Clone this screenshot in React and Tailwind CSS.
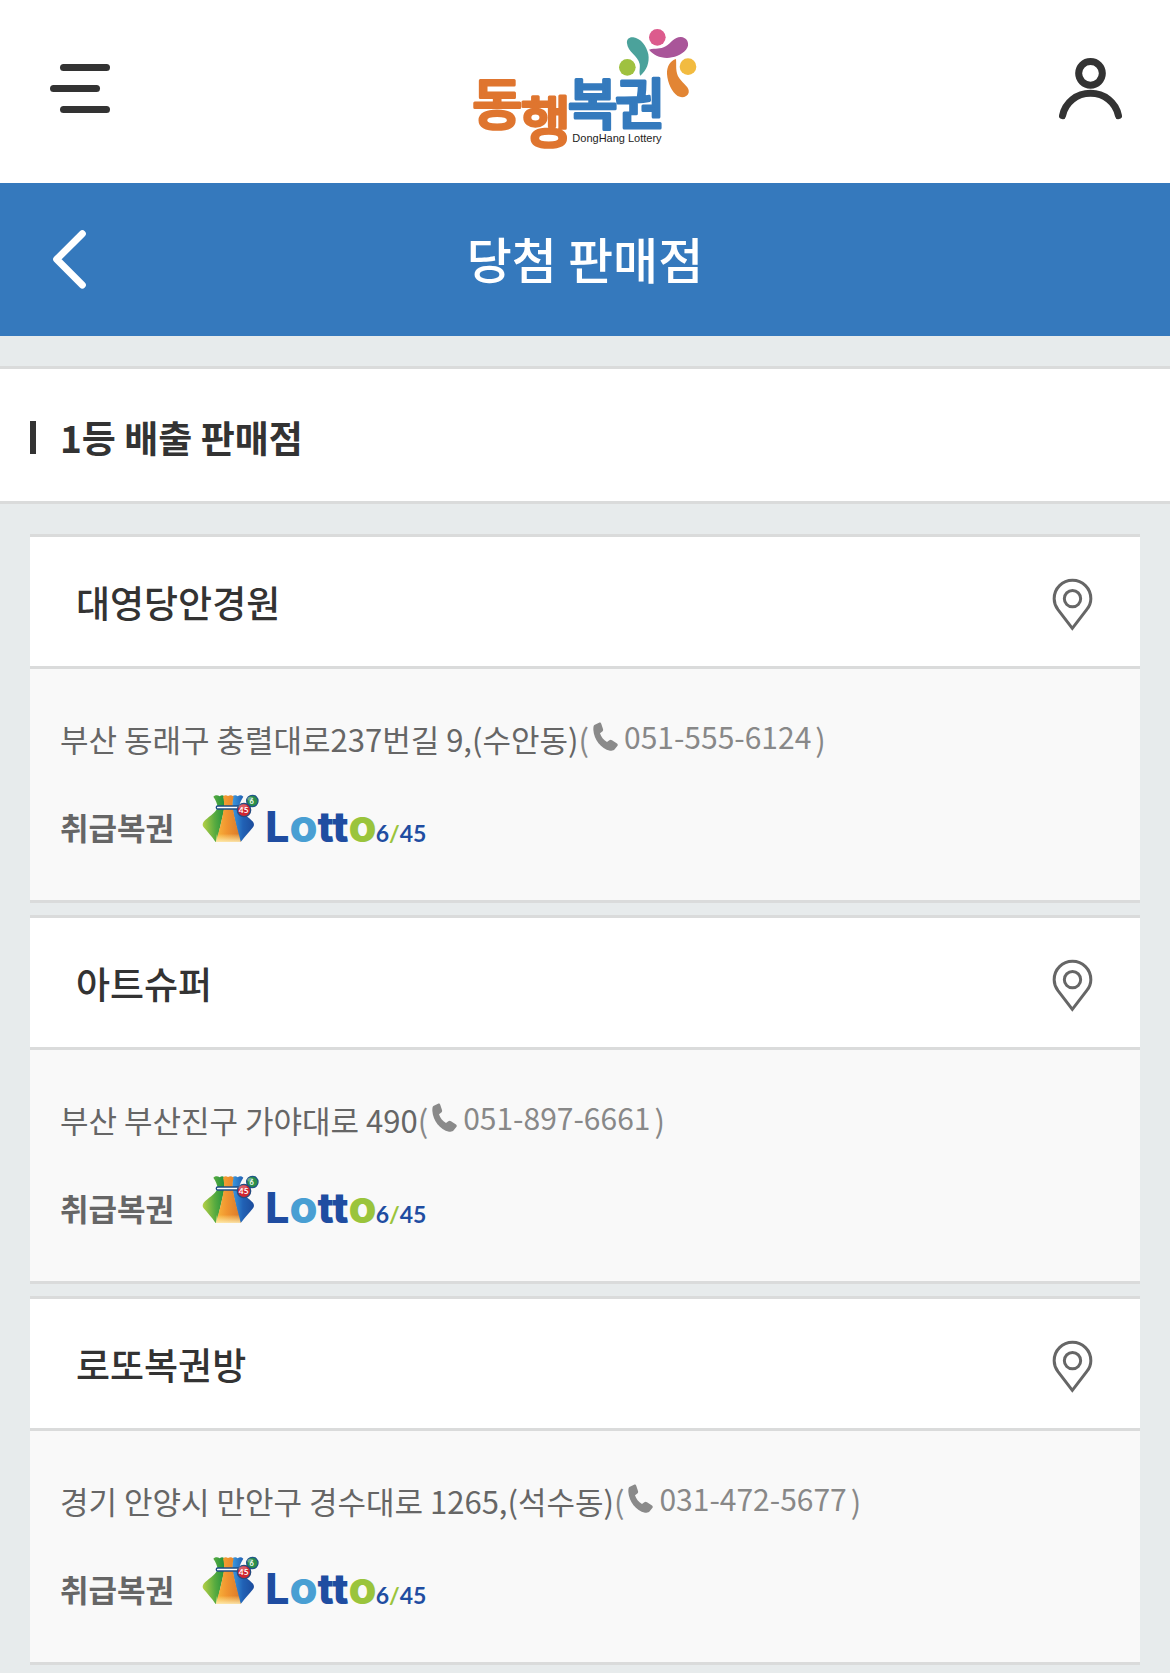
import { useId } from "react";

const stores = [
  {
    name: "대영당안경원",
    address: "부산 동래구 충렬대로237번길 9,(수안동)",
    phone: "051-555-6124",
  },
  { name: "아트슈퍼", address: "부산 부산진구 가야대로 490", phone: "051-897-6661" },
  {
    name: "로또복권방",
    address: "경기 안양시 만안구 경수대로 1265,(석수동)",
    phone: "031-472-5677",
  },
];

function BrandLogo() {
  return (
    <svg viewBox="36 21 678 372" className="h-[124px] w-[226px] overflow-visible" role="img" aria-label="동행복권 DongHang Lottery">
      <circle cx="592" cy="52" r="25" fill="#dc5b8d" />
      <circle cx="502" cy="142" r="25" fill="#9fc140" />
      <circle cx="684" cy="140" r="25" fill="#f2bb40" />
      <path
        d="M501 70C499 57 509 50 520 52C542 55 560 78 565 103C569 128 560 152 541 167C536 158 541 145 539 132C534 107 503 96 501 70Z"
        fill="#4ba29b"
      />
      <path
        d="M567 89C588 84 600 89 617 79C634 68 644 50 663 51C678 52 686 64 684 77C680 94 659 107 636 112C609 118 581 107 567 89Z"
        fill="#a95599"
      />
      <path
        d="M648 117C631 122 620 139 621 162C623 190 636 216 653 228C666 235 682 231 686 218C690 202 670 193 658 175C645 156 650 136 648 117Z"
        fill="#e28534"
      />
      <g
        fontFamily="'Noto Sans CJK KR', sans-serif"
        fontWeight="500"
        fontSize="163"
        textAnchor="middle"
        strokeWidth="9"
        strokeLinejoin="round"
      >
        <text x="112" y="312" fill="#df752f" stroke="#df752f">동</text>
        <text x="257" y="367" fill="#df752f" stroke="#df752f">행</text>
        <text x="398" y="312" fill="#347abd" stroke="#347abd">복</text>
        <text x="540" y="312" fill="#347abd" stroke="#347abd">권</text>
      </g>
      <text x="337" y="367" fontFamily="'Liberation Sans', sans-serif" fontSize="33" fill="#222">
        DongHang Lottery
      </text>
    </svg>
  );
}

function MenuIcon() {
  return (
    <svg viewBox="0 0 60 49" className="h-[49px] w-[60px]" fill="#333" aria-hidden="true">
      <rect x="10" y="0" width="50" height="7" rx="3.5" />
      <rect x="0" y="21" width="50" height="7" rx="3.5" />
      <rect x="10" y="42" width="50" height="7" rx="3.5" />
    </svg>
  );
}

function UserIcon() {
  return (
    <svg
      viewBox="84 48 198 192"
      className="h-16 w-[66px]"
      fill="none"
      stroke="#333"
      strokeWidth="21"
      strokeLinecap="round"
      aria-hidden="true"
    >
      <circle cx="181.500" cy="100" r="35.500" />
      <path d="M97.500 227C106 187 140 160 181.500 160C223 160 257 187 265.500 227" />
    </svg>
  );
}

function BackIcon() {
  return (
    <svg
      viewBox="157 627 105 183"
      className="h-[61px] w-[35px]"
      fill="none"
      stroke="#fff"
      strokeWidth="21"
      strokeLinecap="round"
      strokeLinejoin="round"
      aria-hidden="true"
    >
      <path d="M248 641L171 718L248 795" />
    </svg>
  );
}

function PinIcon() {
  return (
    <svg
      viewBox="96 174 123 159"
      className="h-[53px] w-[41px]"
      fill="none"
      stroke="#666"
      strokeWidth="9"
      aria-hidden="true"
    >
      <path d="M157 325L114 269C106 258 102.500 248 102.500 236C102.500 205 127 181 157.500 181C188 181 212.500 205 212.500 236C212.500 248 209 258 200 269Z" />
      <circle cx="157.500" cy="236" r="24.500" />
    </svg>
  );
}

function PhoneIcon() {
  return (
    <svg viewBox="457 67 75 87" className="h-[29px] w-[25px]" fill="#8a8a8a" aria-hidden="true">
      <path d="M461 76L475 69C479 67 481 69 482 73L487 88C488 92 487 94 484 96L478 101C481 112 489 121 499 127L506 122C509 120 511 120 514 122L528 131C532 134 532 136 530 139L522 149C519 153 514 154 508 153C481 147 460 120 458 90C458 84 458 79 461 76Z" />
    </svg>
  );
}

function LottoLogo() {
  const id = useId();
  return (
    <svg viewBox="36 39 672 150" className="h-[50px] w-[224px] overflow-visible" role="img" aria-label="Lotto 6/45">
      <defs>
        <linearGradient id={`${id}g`} x1="0" x2="1" y1="0.600" y2="0.500">
          <stop offset="0" stopColor="#b4cf45" />
          <stop offset="0.550" stopColor="#58ab40" />
          <stop offset="1" stopColor="#23923d" />
        </linearGradient>
        <linearGradient id={`${id}o`} x1="0" x2="1">
          <stop offset="0" stopColor="#f9b63c" />
          <stop offset="0.450" stopColor="#f0942f" />
          <stop offset="1" stopColor="#d9792b" />
        </linearGradient>
        <linearGradient id={`${id}b`} x1="0" x2="1">
          <stop offset="0" stopColor="#3d9be0" />
          <stop offset="0.500" stopColor="#2161b5" />
          <stop offset="1" stopColor="#1c4c9c" />
        </linearGradient>
        <linearGradient id={`${id}f`} x1="0" x2="0" y1="0" y2="1">
          <stop offset="0" stopColor="#fff59a" stopOpacity="0.100" />
          <stop offset="1" stopColor="#fff3c0" stopOpacity="0.850" />
        </linearGradient>
      </defs>
      <path
        d="M70 50C78 43 84 46 89 49C94 45 98 45 102 48L104 82L80 186L76 185C66 170 52 155 41 142C37 137 37 131 41 125C53 111 75 100 83 83C82 70 77 60 70 50Z"
        fill={`url(#${id}g)`}
      />
      <path
        d="M128 48C134 44 139 45 143 49C149 45 154 45 160 50C153 61 148 71 147 83C156 100 178 112 189 125C193 131 193 137 189 142C178 156 164 170 154 184L149 186L126 82Z"
        fill={`url(#${id}b)`}
      />
      <path
        d="M99 50C104 45 109 45 114 48C120 45 125 45 131 50C128 60 127 72 128 82C133 118 144 150 152 186L78 186C88 150 98 115 102 82C103 70 102 60 99 50Z"
        fill={`url(#${id}o)`}
      />
      <path d="M78 163H147L152 186H78Z" fill={`url(#${id}f)`} />
      <rect x="79" y="78" width="68" height="9" rx="4" fill="#fff" stroke="#1b4d86" strokeWidth="4" />
      <circle cx="187" cy="63" r="17" fill="#2c8f49" stroke="#1d5687" strokeWidth="4" />
      <circle cx="162" cy="90" r="20" fill="#d12630" stroke="#254b80" strokeWidth="4" />
      <ellipse cx="181" cy="56" rx="9" ry="6" fill="#fff" opacity="0.300" />
      <ellipse cx="158" cy="80" rx="13" ry="7" fill="#fff" opacity="0.250" />
      <g fontFamily="Lato, sans-serif" fontWeight="700" fill="#fff" textAnchor="middle">
        <text x="185" y="71" fontSize="22">6</text>
        <text x="161" y="99" fontSize="25">45</text>
      </g>
      <text x="226" y="185" fontFamily="Inter, sans-serif" fontWeight="800" fontSize="128" fill="#1f4da1">
        L<tspan fill="#499fd3" fontSize="136">o</tspan>tt<tspan fill="#9ac43c" fontSize="136">o</tspan>
      </text>
      <text x="557" y="185" fontFamily="Lato, sans-serif" fontWeight="700" fontSize="69" fill="#1f4da1">
        6<tspan fill="#9ac43c">/</tspan>45
      </text>
    </svg>
  );
}

function StoreCard({ store }) {
  return (
    <li className="border-y-[3px] border-[#dadbdb]">
      <div className="flex items-center justify-between border-b-[3px] border-[#dadbdb] bg-white pt-[39px] pr-[47px] pb-[34px] pl-[46px]">
        <h3 className="pb-1 text-[37px] leading-[52px] font-medium text-[#333]">{store.name}</h3>
        <button type="button" aria-label={`${store.name} 위치 보기`}>
          <PinIcon />
        </button>
      </div>
      <div className="bg-[#f9f9f9] px-[30px] pt-[45px] pb-[57px]">
        <p className="flex items-center text-[31px] leading-[50px] text-[#666]">
          <span>{store.address}</span>
          <span className="text-[#888]">(</span>
          <a
            href={`tel:${store.phone}`}
            className="mx-1 flex items-center gap-[6px] pb-[6px] text-[30px] leading-[44px] text-[#888]"
          >
            <PhoneIcon />
            {store.phone}
          </a>
          <span className="text-[#888]">)</span>
        </p>
        <div className="mt-[29px] flex items-end gap-7">
          <strong className="text-[31px] leading-8 font-bold text-[#666]">취급복권</strong>
          <LottoLogo />
        </div>
      </div>
    </li>
  );
}

export default function App() {
  return (
    <div className="min-h-screen bg-[#e7ebec] font-['Noto_Sans_CJK_KR',sans-serif]">
      <header className="grid grid-cols-[1fr_auto_1fr] items-center bg-white px-[46px] pt-[27px] pb-8">
        <button type="button" aria-label="메뉴" className="justify-self-start pb-0.5 pl-1">
          <MenuIcon />
        </button>
        <a href="#home">
          <BrandLogo />
        </a>
        <button type="button" aria-label="내 정보" className="justify-self-end pb-0.5">
          <UserIcon />
        </button>
      </header>

      <div className="grid grid-cols-[1fr_auto_1fr] items-center bg-[#3579bd] px-[52px] py-10">
        <button type="button" aria-label="뒤로" className="justify-self-start">
          <BackIcon />
        </button>
        <h1 className="pb-1 text-[49px] leading-[69px] font-medium text-white">당첨 판매점</h1>
      </div>

      <main className="pt-[30px]">
        <div className="flex items-center gap-6 border-y-[3px] border-[#dadbdb] bg-white px-[30px] pt-10 pb-9">
          <span className="h-[33px] w-[6px] bg-[#333]" />
          <h2 className="text-[37px] leading-[56px] font-bold text-[#333]">1등 배출 판매점</h2>
        </div>
        <ul className="mx-[30px] mt-[30px] flex flex-col gap-3">
          {stores.map((store) => (
            <StoreCard key={store.name} store={store} />
          ))}
        </ul>
      </main>
    </div>
  );
}
